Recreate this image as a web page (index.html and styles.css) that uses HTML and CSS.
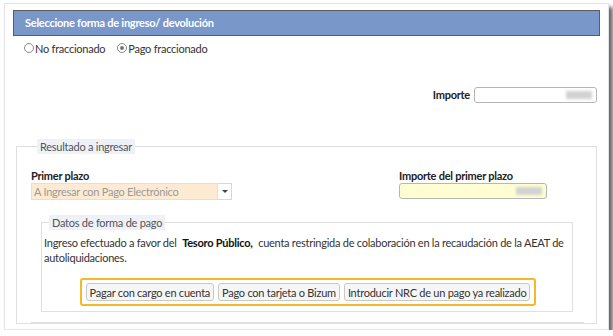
FILE: index.html
```html
<!DOCTYPE html>
<html lang="es">
<head>
    <meta charset="UTF-8">
    <title>Seleccione forma de ingreso</title>
    <link rel="stylesheet" href="styles.css">
</head>
<body>
    <div class="card">
        <div class="header">Seleccione forma de ingreso/ devolución</div>

        <div class="radios">
            <label class="radio"><span class="dot"></span>No fraccionado</label>
            <label class="radio"><span class="dot checked"></span>Pago fraccionado</label>
        </div>

        <div class="importe-row">
            <span class="label">Importe</span>
            <div class="input plain"><span class="blur"></span></div>
        </div>

        <fieldset class="group">
            <legend>Resultado a ingresar</legend>

            <div class="cols">
                <div class="col">
                    <div class="label">Primer plazo</div>
                    <div class="select">
                        <div class="select-value">A Ingresar con Pago Electrónico</div>
                        <div class="select-arrow"><span class="caret"></span></div>
                    </div>
                </div>
                <div class="col right">
                    <div class="label">Importe del primer plazo</div>
                    <div class="input yellow"><span class="blur"></span></div>
                </div>
            </div>

            <fieldset class="group inner">
                <legend>Datos de forma de pago</legend>
                <p class="info"><span>Ingreso efectuado a favor del</span> <b>Tesoro Público,</b> <span>cuenta restringida de colaboración en la recaudación de la AEAT de</span><br><span>autoliquidaciones.</span></p>
                <div class="actions">
                    <div class="highlight">
                        <button class="btn">Pagar con cargo en cuenta</button>
                        <button class="btn">Pago con tarjeta o Bizum</button>
                        <button class="btn">Introducir NRC de un pago ya realizado</button>
                    </div>
                </div>
            </fieldset>
            <div class="next"></div>
        </fieldset>
    </div>
</body>
</html>
```

FILE: styles.css
```css
body {
    margin: 0;
    padding: 3px 0 0 4px;
    background: #ffffff;
    font-family: "Source Sans Pro", Lato, "Liberation Sans", sans-serif;
    font-size: 11px;
    letter-spacing: -0.25px;
    color: #333333;
}

.card {
    width: 595px;
    height: 319px;
    border: 1px solid #e4e4e4;
    background: #ffffff;
    box-shadow: 4px 4px 4px rgba(0, 0, 0, 0.6);
    padding: 6px 0 0 8px;
    box-sizing: content-box;
    overflow: hidden;
}

.header {
    width: 574px;
    height: 24px;
    line-height: 24px;
    padding-left: 11px;
    background: #7a97c9;
    border: 1px solid #5c5c5c;
    color: #ffffff;
    font-weight: bold;
}

.radios {
    display: flex;
    gap: 12px;
    padding: 3px 0 0 11px;
    height: 18px;
    align-items: center;
}

.radio {
    display: flex;
    align-items: center;
}

.dot {
    width: 8px;
    height: 8px;
    border: 1px solid #8a8a8a;
    border-radius: 50%;
    margin-right: 1px;
    background: #ffffff;
    position: relative;
}

.dot.checked::after {
    content: "";
    position: absolute;
    left: 2px;
    top: 2px;
    width: 4px;
    height: 4px;
    border-radius: 50%;
    background: #777777;
}

.importe-row {
    display: flex;
    justify-content: flex-end;
    align-items: center;
    gap: 4px;
    width: 584px;
    margin-top: 30px;
}

.label {
    font-weight: bold;
    color: #222222;
    line-height: 14px;
}

.input {
    height: 14px;
    border: 1px solid #b5b5b5;
    border-radius: 3px;
    display: flex;
    justify-content: flex-end;
    align-items: center;
    padding-right: 4px;
}

.input.plain {
    width: 117px;
    background: #ffffff;
}

.input.yellow {
    width: 142px;
    background: #fefed2;
}

.blur {
    width: 26px;
    height: 8px;
    background: #d2d2d2;
    filter: blur(1.5px);
}

.group {
    border: 1px solid #e0e0e0;
    margin: 36px 0 0 3px;
    padding: 15px 0 0 14px;
    width: 565px;
}

.group legend {
    background: #eef1f7;
    color: #555555;
    padding: 0 3px;
    margin-left: 6px;
    line-height: 15px;
}

.cols {
    display: flex;
}

.col {
    width: 368px;
}

.col.right {
    width: auto;
}

.select {
    display: flex;
    width: 201px;
    height: 17px;
}

.select-value {
    flex: 1;
    background: #fdead3;
    border: 1px solid #e8ddd0;
    color: #9a9a9a;
    line-height: 15px;
    padding-left: 2px;
}

.select-arrow {
    width: 13px;
    border: 1px solid #d8d8d8;
    border-left: none;
    display: flex;
    justify-content: center;
    align-items: center;
}

.caret {
    width: 0;
    height: 0;
    border-left: 3px solid transparent;
    border-right: 3px solid transparent;
    border-top: 3px solid #444444;
}

.group.inner {
    margin: 15px 0 0 10px;
    padding: 5px 0 5px 2px;
    width: 528px;
}

.group.inner legend {
    margin-left: 5px;
}

.info {
    margin: 0;
    line-height: 15px;
}

.info b {
    color: #111111;
    margin: 0 3px;
}

.actions {
    display: flex;
    justify-content: center;
    margin-top: 13px;
}

.highlight {
    display: flex;
    gap: 4px;
    border: 2px solid #f5b829;
    border-radius: 3px;
    padding: 3px 4px;
}

.btn {
    font-family: inherit;
    font-size: 11px;
    letter-spacing: -0.25px;
    color: #333333;
    background: #f6f6f6;
    border: 1px solid #c8c8c8;
    border-radius: 3px;
    height: 18px;
    padding: 0 3px;
}

.next {
    border-top: 1px solid #e0e0e0;
    margin: 10px 0 0 0;
    width: 553px;
}
```
